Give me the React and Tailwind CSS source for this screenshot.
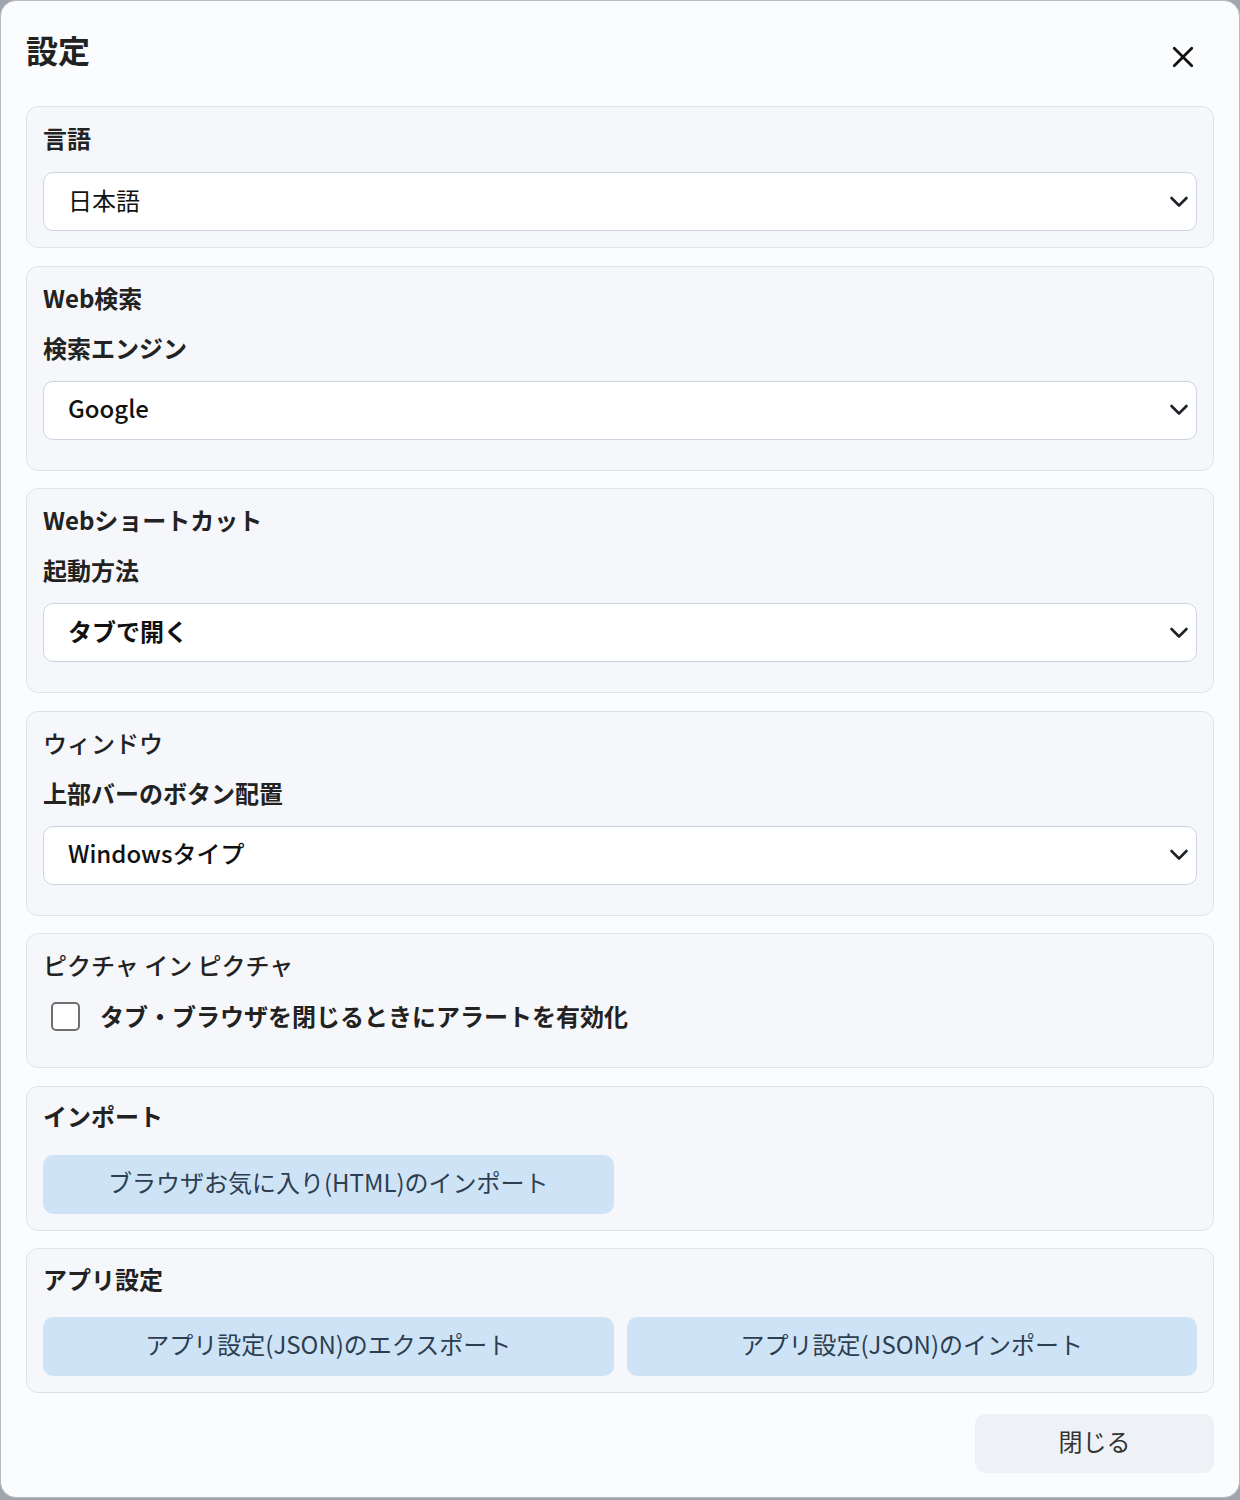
import { useState } from 'react';

const FONT = { fontFamily: '"Noto Sans CJK JP", "Noto Sans", sans-serif' };

function Chevron() {
    return (
        <svg className="w-[24px] h-[24px] text-[#1f2328]" fill="none" stroke="currentColor" viewBox="0 0 24 24">
            <path strokeLinecap="round" strokeLinejoin="round" strokeWidth={2.6} d="M4.5 8l7.5 7.5L19.5 8" />
        </svg>
    );
}

function Select({ value, weight = 'font-normal' }) {
    return (
        <div className="h-[59px] bg-white border border-[#cbd4de] rounded-[10px] flex items-center pl-[24px] pr-[4px]">
            <span className={`flex-1 pb-[4px] text-[24px] leading-[34px] text-[#111] ${weight}`}>{value}</span>
            <span className="w-[24px] h-[24px] mr-[1px] flex items-center justify-center"><Chevron /></span>
        </div>
    );
}

function Section({ children, className = '' }) {
    return (
        <section className={`bg-[#f6f7fa] border border-[#dfe3e8] rounded-[12px] px-[16px] ${className}`}>
            {children}
        </section>
    );
}

function Title({ children, weight = 'font-bold' }) {
    return <h3 className={`text-[24px] leading-[34px] text-[#222] ${weight}`}>{children}</h3>;
}

function SubLabel({ children }) {
    return <div className="mt-[16px] text-[24px] leading-[34px] font-semibold text-[#222]">{children}</div>;
}

function ActionButton({ children }) {
    return (
        <button className="h-[59px] pb-[5px] rounded-[10px] bg-[#cfe3f6] text-[#2c3e50] text-[24px] font-normal hover:bg-[#bcd7f1] transition-colors">
            {children}
        </button>
    );
}

export default function App() {
    const [alert, setAlert] = useState(false);

    return (
        <div className="w-[1240px] h-[1500px] bg-[#9ea5ad]" style={FONT}>
            <div className="w-full h-[1498px] bg-[#fbfcfd] rounded-[16px] border border-[#b5bbc2] px-[25px] pt-[30px] flex flex-col">
                {/* Header */}
                <div className="flex items-center justify-between h-[36px]">
                    <h2 className="text-[32px] leading-[36px] font-bold text-[#222]">設定</h2>
                    <button className="mr-[16px] mt-[16px] text-[#111]">
                        <svg className="w-[30px] h-[30px]" fill="none" stroke="currentColor" viewBox="0 0 24 24">
                            <path strokeLinecap="round" strokeLinejoin="round" strokeWidth={2.2} d="M5 5l14 14M19 5L5 19" />
                        </svg>
                    </button>
                </div>

                <div className="mt-[39px] flex flex-col gap-[17.5px]">
                    {/* 言語 */}
                    <Section className="pt-[14px] pb-[16px]">
                        <Title>言語</Title>
                        <div className="mt-[17px]"><Select value="日本語" /></div>
                    </Section>

                    {/* Web検索 */}
                    <Section className="pt-[14px] pb-[30px]">
                        <Title>Web検索</Title>
                        <SubLabel>検索エンジン</SubLabel>
                        <div className="mt-[16px]"><Select value="Google" weight="font-medium" /></div>
                    </Section>

                    {/* Webショートカット */}
                    <Section className="pt-[14px] pb-[30px]">
                        <Title>Webショートカット</Title>
                        <SubLabel>起動方法</SubLabel>
                        <div className="mt-[16px]"><Select value="タブで開く" weight="font-bold" /></div>
                    </Section>

                    {/* ウィンドウ */}
                    <Section className="pt-[14px] pb-[30px]">
                        <Title weight="font-medium">ウィンドウ</Title>
                        <SubLabel>上部バーのボタン配置</SubLabel>
                        <div className="mt-[16px]"><Select value="Windowsタイプ" weight="font-medium" /></div>
                    </Section>

                    {/* PiP */}
                    <Section className="pt-[14px] pb-[34px]">
                        <Title weight="font-medium">ピクチャ イン ピクチャ</Title>
                        <label className="mt-[17px] flex items-center gap-[20px] pl-[8px] cursor-pointer">
                            <span
                                onClick={() => setAlert(!alert)}
                                className="w-[29px] h-[29px] rounded-[5px] border-2 border-[#6f6f6f] bg-white flex-shrink-0"
                            />
                            <span className="text-[24px] leading-[34px] font-semibold text-[#222]">タブ・ブラウザを閉じるときにアラートを有効化</span>
                        </label>
                    </Section>

                    {/* インポート */}
                    <Section className="pt-[12px] pb-[16px]">
                        <Title>インポート</Title>
                        <div className="mt-[22px] grid grid-cols-2 gap-[13px]">
                            <ActionButton>ブラウザお気に入り(HTML)のインポート</ActionButton>
                        </div>
                    </Section>

                    {/* アプリ設定 */}
                    <Section className="pt-[13px] pb-[16px]">
                        <Title>アプリ設定</Title>
                        <div className="mt-[21px] grid grid-cols-2 gap-[13px]">
                            <ActionButton>アプリ設定(JSON)のエクスポート</ActionButton>
                            <ActionButton>アプリ設定(JSON)のインポート</ActionButton>
                        </div>
                    </Section>
                </div>

                {/* Footer */}
                <div className="mt-[21px] flex justify-end">
                    <button className="w-[239px] h-[59px] pb-[5px] rounded-[10px] bg-[#eef1f5] text-[#333] text-[24px] font-normal hover:bg-[#e2e6ec] transition-colors">
                        閉じる
                    </button>
                </div>
            </div>
        </div>
    );
}
